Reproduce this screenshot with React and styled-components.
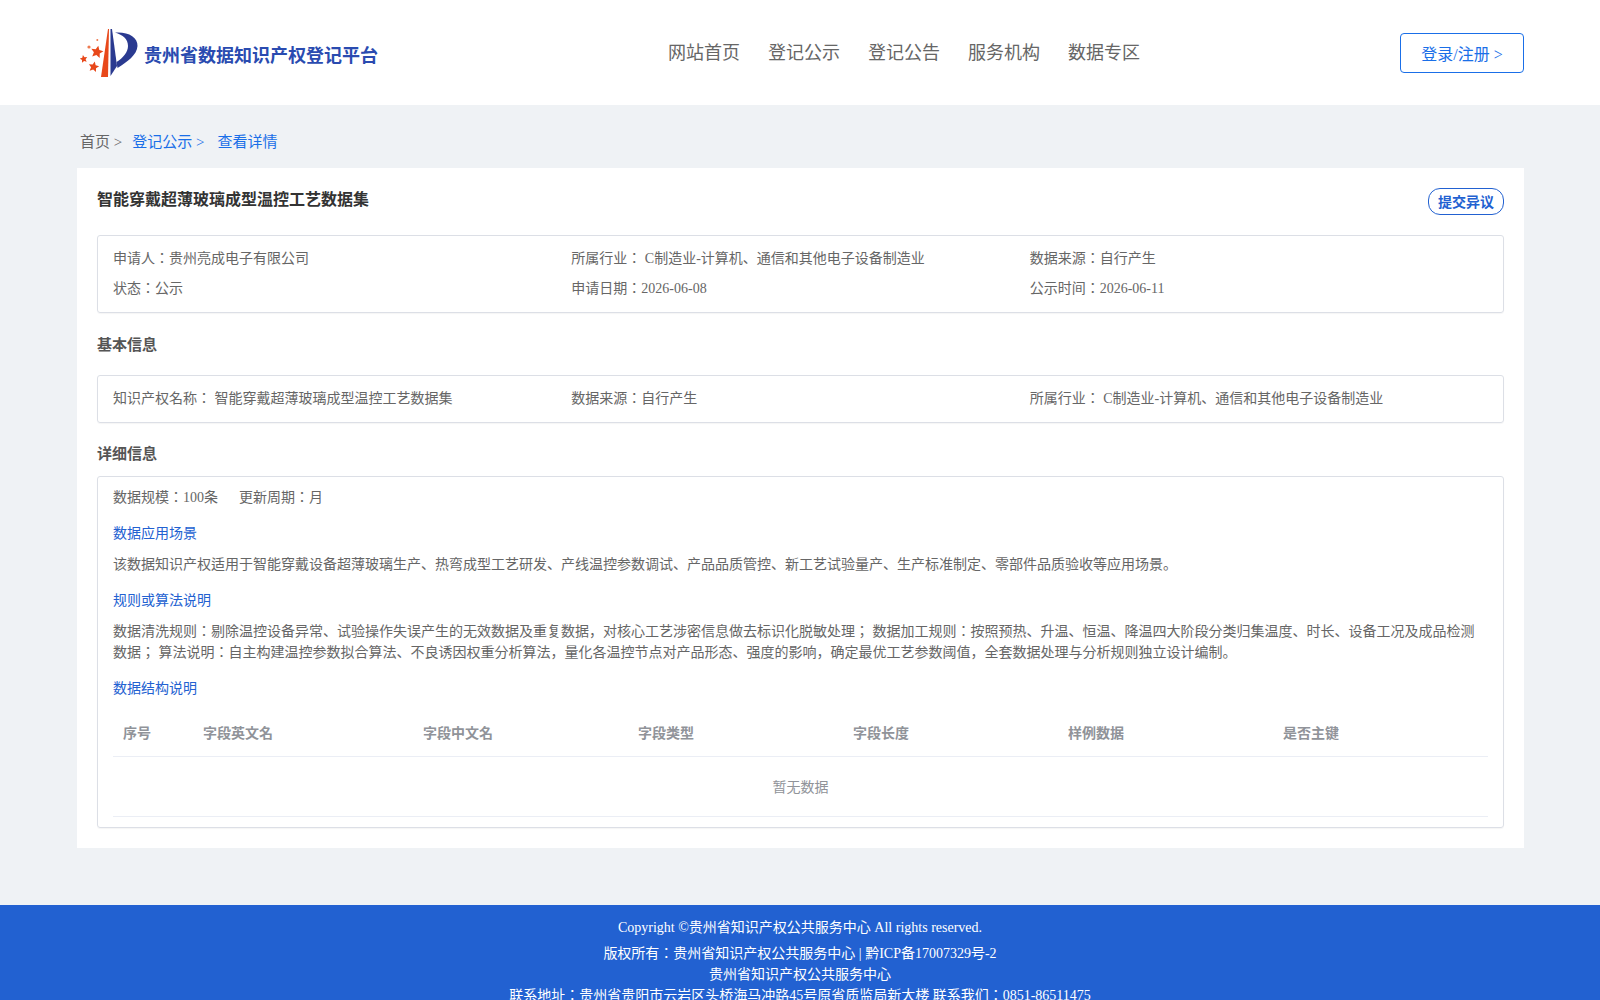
import React from "react";
import styled, { createGlobalStyle } from "styled-components";

const blue = "#1a6fe8";
const linkBlue = "#2261d1";
const textGray = "#666";
const lineGray = "#dcdfe6";
const bodyFont = `"Liberation Serif", "Noto Sans CJK JP", serif`;

const GlobalStyle = createGlobalStyle`
  html, body {
    margin: 0;
    padding: 0;
    height: 1000px;
    overflow: hidden;
    background: #eff2f5;
    font-family: ${bodyFont};
    font-size: 14px;
    color: ${textGray};
  }
  * { box-sizing: border-box; }
`;

const Header = styled.header`
  height: 105px;
  background: #fff;
  padding: 0 76px 0 77px;
  display: flex;
  align-items: center;
`;

const Brand = styled.div`
  width: 591px;
  display: flex;
  align-items: center;
  padding: 3px 0 0 3px;
`;

const BrandName = styled.span`
  margin-left: 6px;
  font-size: 18px;
  font-weight: bold;
  color: #2a4bb0;
`;

const Nav = styled.nav`
  display: flex;
  gap: 28px;
  padding-bottom: 4px;
`;

const NavItem = styled.a`
  font-size: 18px;
  color: #666;
`;

const LoginButton = styled.button`
  margin-left: auto;
  width: 124px;
  height: 40px;
  background: #fff;
  border: 1px solid ${blue};
  border-radius: 4px;
  color: ${blue};
  font: 16px ${bodyFont};
`;

const Crumbs = styled.div`
  height: 63px;
  padding: 27px 80px 0;
  font-size: 15px;
  line-height: 20px;
  display: flex;
`;

const Crumb = styled.span`
  color: ${(p) => (p.$active ? blue : "#666")};
  margin-right: ${(p) => p.$gap}px;
`;

const Card = styled.main`
  margin: 0 76px 0 77px;
  height: 680px;
  background: #fff;
  padding: 20px;
`;

const TitleRow = styled.div`
  display: flex;
  justify-content: space-between;
  align-items: flex-start;
  height: 47px;
`;

const Title = styled.h1`
  margin: 0;
  font-size: 16px;
  line-height: 24px;
  font-weight: bold;
  color: #333;
`;

const ObjectionButton = styled.button`
  width: 76px;
  height: 27px;
  padding: 0 0 2px;
  background: #fff;
  border: 1px solid ${linkBlue};
  border-radius: 12px;
  color: ${linkBlue};
  font: bold 14px ${bodyFont};
`;

const Box = styled.section`
  border: 1px solid ${lineGray};
  border-radius: 3px;
  box-shadow: 0 1px 1px rgba(0, 0, 0, 0.04);
  padding: ${(p) => p.$padding};
`;

const InfoGrid = styled.div`
  display: grid;
  grid-template-columns: repeat(3, 1fr);
  grid-auto-rows: 30px;
  align-items: center;
`;

const SectionTitle = styled.h2`
  margin: 0;
  font-size: 15px;
  line-height: 20px;
  font-weight: bold;
  color: #555;
  padding: ${(p) => p.$padding};
`;

const Meta = styled.div`
  display: flex;
  gap: 21px;
  line-height: 20px;
`;

const SubTitle = styled.div`
  color: ${linkBlue};
  line-height: 20px;
  margin-top: 16px;
`;

const Paragraph = styled.p`
  margin: 10px 0 0;
  line-height: 21px;
`;

const Table = styled.table`
  width: 100%;
  table-layout: fixed;
  border-collapse: collapse;
  margin-top: 11px;
`;

const Th = styled.th`
  width: ${(p) => p.$width}px;
  height: 46px;
  padding: 0 0 2px 10px;
  text-align: left;
  font-weight: bold;
  color: #909399;
  border-bottom: 1px solid #ebeef5;
`;

const Empty = styled.td`
  height: 60px;
  text-align: center;
  color: #909399;
  border-bottom: 1px solid #ebeef5;
`;

const Footer = styled.footer`
  margin-top: 57px;
  height: 110px;
  background: ${linkBlue};
  color: #fff;
  text-align: center;
  padding-top: 12px;
  line-height: 21px;
`;

const Copyright = styled.div`
  margin-bottom: 5px;
`;

const starPoints = (cx, cy, r, turn) => {
  const points = [];
  for (let i = 0; i < 10; i++) {
    const radius = i % 2 === 0 ? r : r * 0.48;
    const angle = turn + (i * Math.PI) / 5;
    points.push(`${(cx + radius * Math.sin(angle)).toFixed(2)},${(cy - radius * Math.cos(angle)).toFixed(2)}`);
  }
  return points.join(" ");
};

const Logo = () => (
  <svg width="58" height="50" viewBox="0 0 58 50">
    <path d="M28 0 L21 48 L28 48 L29 0 Z" fill="#e8481a" />
    <path d="M30.5 0 L30.5 47 L37 37 L32 0 Z" fill="#2a3a90" />
    <path d="M35 3.5 C48 2.5 58 8 57.5 17 C57 26 47 33 37.5 39 L36.5 33 C43 29 48 23 48 17 C48 10 43 6 35 3.5 Z" fill="#2a3a90" />
    <polygon points={starPoints(17, 23, 6.5, 0.2)} fill="#e8481a" />
    <polygon points={starPoints(3.7, 30, 4, -0.2)} fill="#e8481a" />
    <polygon points={starPoints(13.7, 38, 5.5, 0.2)} fill="#e8481a" />
    <circle cx="9" cy="18" r="1.6" fill="#ee7a50" />
    <circle cx="17.3" cy="11" r="1" fill="#ee7a50" />
  </svg>
);

const navItems = ["网站首页", "登记公示", "登记公告", "服务机构", "数据专区"];
const columns = [
  { name: "序号", width: 80 },
  { name: "字段英文名", width: 220 },
  { name: "字段中文名", width: 215 },
  { name: "字段类型", width: 215 },
  { name: "字段长度", width: 215 },
  { name: "样例数据", width: 215 },
  { name: "是否主键", width: 215 },
];

export default function App() {
  return (
    <>
      <GlobalStyle />
      <Header>
        <Brand>
          <Logo />
          <BrandName>贵州省数据知识产权登记平台</BrandName>
        </Brand>
        <Nav>
          {navItems.map((item) => (
            <NavItem key={item}>{item}</NavItem>
          ))}
        </Nav>
        <LoginButton>登录/注册 &gt;</LoginButton>
      </Header>
      <Crumbs>
        <Crumb $gap={10}>首页 &gt;</Crumb>
        <Crumb $active $gap={13}>登记公示 &gt;</Crumb>
        <Crumb $active>查看详情</Crumb>
      </Crumbs>
      <Card>
        <TitleRow>
          <Title>智能穿戴超薄玻璃成型温控工艺数据集</Title>
          <ObjectionButton>提交异议</ObjectionButton>
        </TitleRow>
        <Box $padding="6px 15px 10px">
          <InfoGrid>
            <span>申请人：贵州亮成电子有限公司</span>
            <span>所属行业： C制造业-计算机、通信和其他电子设备制造业</span>
            <span>数据来源：自行产生</span>
            <span>状态：公示</span>
            <span>申请日期：2026-06-08</span>
            <span>公示时间：2026-06-11</span>
          </InfoGrid>
        </Box>
        <SectionTitle $padding="22px 0 20px">基本信息</SectionTitle>
        <Box $padding="6px 15px 10px">
          <InfoGrid>
            <span>知识产权名称： 智能穿戴超薄玻璃成型温控工艺数据集</span>
            <span>数据来源：自行产生</span>
            <span>所属行业： C制造业-计算机、通信和其他电子设备制造业</span>
          </InfoGrid>
        </Box>
        <SectionTitle $padding="21px 0 12px">详细信息</SectionTitle>
        <Box $padding="11px 15px 10px">
          <Meta>
            <span>数据规模：100条</span>
            <span>更新周期：月</span>
          </Meta>
          <SubTitle>数据应用场景</SubTitle>
          <Paragraph>该数据知识产权适用于智能穿戴设备超薄玻璃生产、热弯成型工艺研发、产线温控参数调试、产品品质管控、新工艺试验量产、生产标准制定、零部件品质验收等应用场景。</Paragraph>
          <SubTitle>规则或算法说明</SubTitle>
          <Paragraph>数据清洗规则：剔除温控设备异常、试验操作失误产生的无效数据及重复数据，对核心工艺涉密信息做去标识化脱敏处理； 数据加工规则：按照预热、升温、恒温、降温四大阶段分类归集温度、时长、设备工况及成品检测数据； 算法说明：自主构建温控参数拟合算法、不良诱因权重分析算法，量化各温控节点对产品形态、强度的影响，确定最优工艺参数阈值，全套数据处理与分析规则独立设计编制。</Paragraph>
          <SubTitle>数据结构说明</SubTitle>
          <Table>
            <thead>
              <tr>
                {columns.map((col) => (
                  <Th key={col.name} $width={col.width}>{col.name}</Th>
                ))}
              </tr>
            </thead>
            <tbody>
              <tr>
                <Empty colSpan={columns.length}>暂无数据</Empty>
              </tr>
            </tbody>
          </Table>
        </Box>
      </Card>
      <Footer>
        <Copyright>Copyright ©贵州省知识产权公共服务中心 All rights reserved.</Copyright>
        <div>版权所有：贵州省知识产权公共服务中心 | 黔ICP备17007329号-2</div>
        <div>贵州省知识产权公共服务中心</div>
        <div>联系地址：贵州省贵阳市云岩区头桥海马冲路45号原省质监局新大楼 联系我们：0851-86511475</div>
      </Footer>
    </>
  );
}
